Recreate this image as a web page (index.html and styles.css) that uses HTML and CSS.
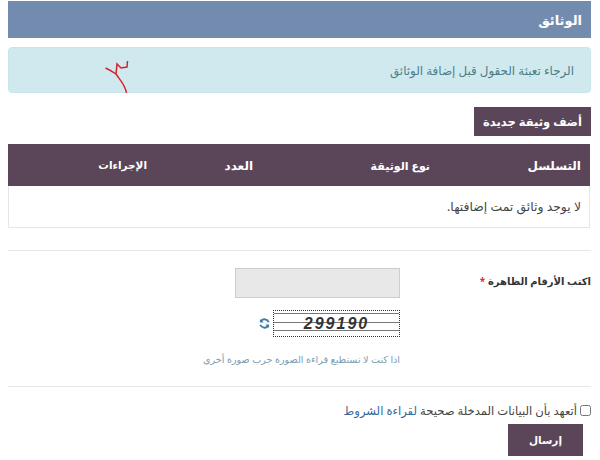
FILE: index.html
```
<!DOCTYPE html>
<html lang="ar" dir="rtl">
<head>
<meta charset="utf-8">
<title>الوثائق</title>
<link rel="stylesheet" href="styles.css">
</head>
<body>
<main class="page">
  <h2 class="title">الوثائق</h2>
  <div class="alert">
    <p class="alert-text">الرجاء تعبئة الحقول قبل إضافة الوثائق</p>
    <svg class="scribble" width="24" height="34" viewBox="0 0 24 34"><path d="M0.5 8 C5 10 8 12 11 14 C14 19 20 24 21.5 33 M11 14 L12 4 L16 8 L22 7 L22.5 1" fill="none" stroke="#d5232f" stroke-width="1.5"/></svg>
  </div>
  <div class="add-row"><button class="add-btn" type="button">أضف وثيقة جديدة</button></div>
  <table class="docs">
    <thead>
      <tr><th class="c1">التسلسل</th><th class="c2">نوع الوثيقة</th><th class="c3">العدد</th><th class="c4">الإجراءات</th></tr>
    </thead>
    <tbody>
      <tr><td colspan="4">لا يوجد وثائق تمت إضافتها.</td></tr>
    </tbody>
  </table>
  <hr class="rule first">
  <section class="captcha-row">
    <label class="cap-label" for="cap">اكتب الأرقام الظاهرة <span class="req">*</span></label>
    <div class="cap-field">
      <input id="cap" class="cap-input" type="text">
      <div class="cap-image-row">
        <div class="cap-image"><span class="cap-line one"></span><span class="cap-line two"></span><span class="cap-line three"></span><span class="cap-digits" dir="ltr">299190</span></div>
        <svg class="refresh" width="11" height="11" viewBox="0 0 12 12"><path d="M10.6 4.6A4.8 4.8 0 0 0 2.2 3.4M1.4 7.4A4.8 4.8 0 0 0 9.8 8.6" fill="none" stroke="#3f7aa3" stroke-width="2"/><path d="M1 1v4h4zM11 11V7H7z" fill="#3f7aa3"/></svg>
      </div>
      <p class="cap-help">اذا كنت لا تستطيع قراءة الصورة جرب صورة أخرى</p>
    </div>
  </section>
  <hr class="rule second">
  <div class="agree">
    <input class="check" type="checkbox">
    <span>أتعهد بأن البيانات المدخلة صحيحة <a class="terms" href="#">لقراءة الشروط</a></span>
  </div>
  <div class="send-row"><button class="send" type="button">إرسال</button></div>
</main>
</body>
</html>
```
FILE: styles.css
```
* { box-sizing: border-box; }
html, body { margin: 0; }
body {
  background: #fff;
  color: #444;
  font-family: "Noto Sans", "DejaVu Sans", sans-serif;
  font-size: 12px;
  overflow: hidden;
}
.page { width: 600px; height: 460px; padding: 1px 9px 0 8px; overflow: hidden; }
.title {
  margin: 0;
  height: 37px;
  padding: 0 9px 0 0;
  background: #748bb0;
  color: #fff;
  font-size: 13px;
  font-weight: 700;
  line-height: 38px;
}
.alert {
  margin-top: 9px;
  height: 46px;
  padding: 0 16px 0 0;
  background: #d0e9ef;
  border: 1px solid #c8e5ec;
  border-radius: 4px;
  display: flex;
  align-items: center;
  position: relative;
}
.alert-text { margin: 0; color: #4b7d86; font-size: 11.9px; }
.scribble { position: absolute; left: 96px; top: 12px; }
.add-row { margin-top: 14px; display: flex; }
.add-btn {
  height: 29px;
  width: 117px;
  padding: 0;
  border: 0;
  background: #5b4659;
  color: #fff;
  font: 700 11.5px "Noto Sans", "DejaVu Sans", sans-serif;
}
.docs {
  margin: 8px 1px 0 0;
  width: 582px;
  border-collapse: separate;
  border-spacing: 0;
  table-layout: fixed;
}
.docs th {
  height: 42px;
  padding: 0;
  background: #5b4659;
  color: #fff;
  font-size: 11px;
  font-weight: 700;
  text-align: right;
}
.docs th.c1 { padding-right: 9px; font-size: 12px; }
.c1 { width: 160px; }
.c2 { width: 177px; }
.c3 { width: 106px; }
.docs th.c3 { font-size: 12px; }
.docs th.c4 { font-size: 10.5px; }
.docs td {
  height: 42px;
  padding: 0 8px;
  border: 1px solid #e6e6e6;
  border-top: 0;
  font-size: 12.4px;
  color: #444;
}
.rule { margin: 0; border: 0; border-top: 1px solid #e8e8e8; }
.rule.first { margin-top: 22px; }
.captcha-row { display: flex; padding-top: 17px; }
.cap-label { width: 191px; padding-top: 6px; font-size: 10px; font-weight: 600; color: #333; }
.req { color: #d0202e; }
.cap-field { width: 165px; }
.cap-input {
  display: block;
  width: 165px;
  height: 30px;
  border: 1px solid #ccc;
  background: #e8e8e8;
}
.cap-image-row { margin-top: 12px; display: flex; align-items: center; gap: 3px; }
.cap-image {
  width: 127px;
  height: 27px;
  border: 1px dotted #333;
  background: #fff;
  position: relative;
  display: flex;
  align-items: center;
  justify-content: center;
  overflow: hidden;
}
.cap-line { position: absolute; left: 0; right: 0; height: 1px; background: #777; }
.cap-line.one { top: 2px; }
.cap-line.two { top: 11px; }
.cap-line.three { top: 19px; }
.cap-digits {
  position: relative;
  font: italic 700 16px "Liberation Sans", sans-serif;
  letter-spacing: 2px;
  color: #333;
}
.refresh { flex: none; }
.cap-help {
  margin: 16px 0 0;
  width: 240px;
  color: #7b9bb0;
  font-size: 9.6px;
  white-space: nowrap;
}
.rule.second { margin-top: 20px; }
.agree { margin-top: 16px; display: flex; align-items: center; gap: 3px; font-size: 11.6px; color: #444; }
.check { margin: 0; width: 11px; height: 11px; }
.terms { color: #35689a; text-decoration: none; }
.send-row { margin-top: 6px; padding-right: 8px; display: flex; }
.send {
  width: 75px;
  height: 32px;
  padding: 0;
  border: 0;
  background: #5b4659;
  color: #fff;
  font: 600 10.5px "Noto Sans", "DejaVu Sans", sans-serif;
}
```
